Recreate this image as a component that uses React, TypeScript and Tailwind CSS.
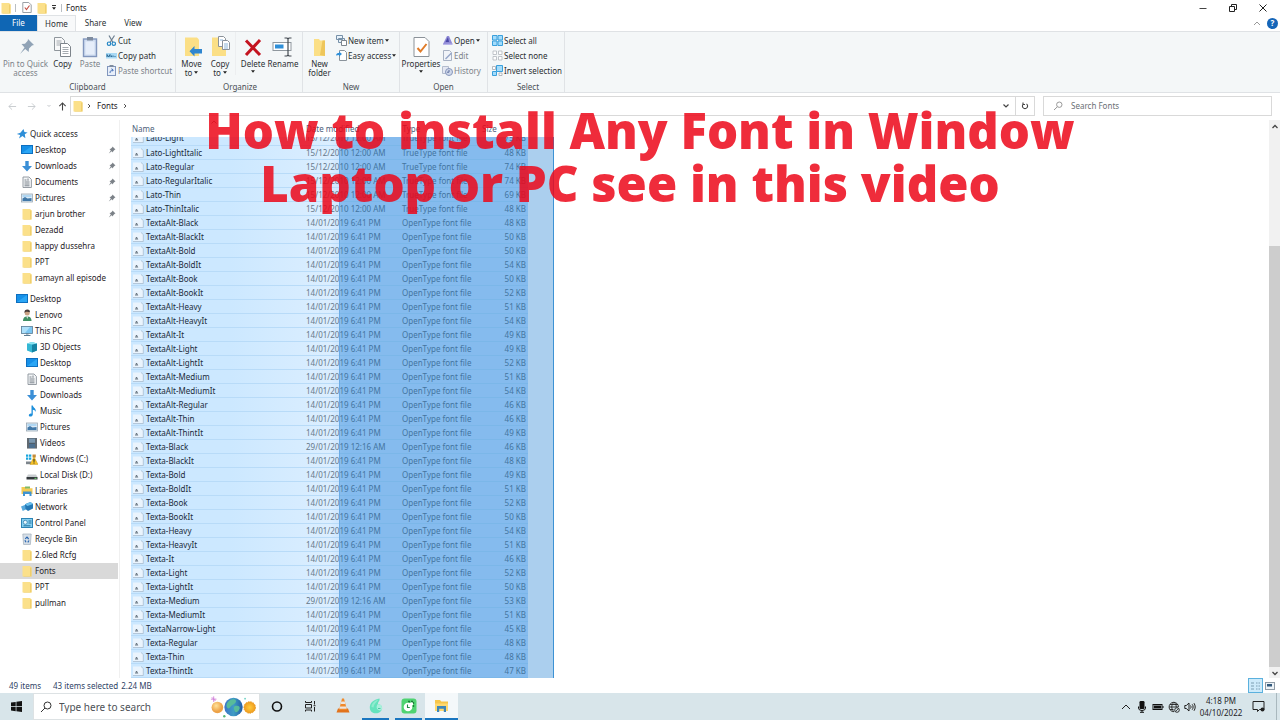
import type { ReactNode } from "react";

const ui = "font-['Noto_Sans','Open_Sans',sans-serif]";

type IconName =
  | "star" | "desktop" | "download" | "doc" | "picture" | "folder" | "user" | "pc" | "cube"
  | "music" | "video" | "windrive" | "disk" | "library" | "network" | "control" | "recycle";

const navShapes: Record<IconName, ReactNode> = {
  star: (
    <path d="M7.500 1l.9 3 3.200.5-2.800 1.800.6 4-3-2.400L3 10.500l1.200-3.400L.8 6l3.600-1.200z" fill="#2f8fd8" />
  ),
  desktop: (
    <>
      <rect x="0.5" y="1.5" width="11" height="8" fill="#1690e8" stroke="#0d6fc0" />
      <path d="M1 9l10-7v7z" fill="#2ba6f5" />
    </>
  ),
  download: <path d="M4.3 1h3.4v5H11L6 11.5 1 6h3.3z" fill="#3b8fd6" />,
  doc: (
    <>
      <path d="M2 1h6l2.4 2.4V11.5H2z" fill="#f4f6f8" stroke="#8b929a" strokeWidth=".9" />
      <path d="M3.5 4h2M3.5 6h5M3.5 8h5M3.5 9.8h5M7 2.5v2.3" stroke="#6d7680" strokeWidth=".9" />
    </>
  ),
  picture: (
    <>
      <rect x="0.5" y="2" width="11" height="8" fill="#dcebf7" stroke="#9aa7b2" strokeWidth=".8" />
      <path d="M1.5 9V6.5L4 5l2.5 1.6L10.5 6v3z" fill="#4178a8" />
      <path d="M1.5 3.2h9v1.6h-9z" fill="#a6d3f2" />
    </>
  ),
  folder: (
    <>
      <path d="M1.500 1h7.500l1.500 1.200V11.500h-9z" fill="#fbe08a" />
      <path d="M9 2.500h1.500v9H2.500V11H9z" fill="#f0cf6c" />
    </>
  ),
  user: (
    <>
      <path d="M2 12c0-3.4 1.6-4.6 4.2-4.6S10.500 8.600 10.500 12z" fill="#3f8f63" />
      <circle cx="6.200" cy="4" r="2.500" fill="#c9a183" />
      <path d="M3.500 4c-.3-2.600 1-3.500 2.900-3.500S9.200 1.700 8.900 3.200C7.500 2.700 5.500 2.500 4.600 3z" fill="#463a38" />
      <path d="M5.400 7.400h1.700L6.300 10z" fill="#eee" />
    </>
  ),
  pc: (
    <>
      <rect x="0.5" y="1.500" width="11" height="7" fill="#7cc6f2" stroke="#5d7d94" strokeWidth=".8" />
      <path d="M1 2l8 0-5 6H1z" fill="#aee0fa" />
      <path d="M3 10.500h6.500M5 9h2.500" stroke="#5d7d94" />
    </>
  ),
  cube: (
    <>
      <path d="M1 2.500L6 1l5 1.500v7L6 11.500 1 9.500z" fill="#35b7d4" />
      <path d="M6 3.500l5-1v7l-5 2z" fill="#1583a3" />
      <path d="M1 2.500L6 1l5 1.500-5 1z" fill="#8de4f2" />
    </>
  ),
  music: (
    <path d="M5.500 .5h1.300c.3 2.300 4 3.200 2.700 6.500-.3-1.600-1.300-2.100-2.700-2.300V9.500c0 1.400-1.400 2.100-2.600 2-1.600-.2-2.100-2 0-2.800.5-.2.900-.2 1.300 0z" fill="#1d8fdb" />
  ),
  video: (
    <>
      <rect x="1" y="1" width="10" height="10.500" fill="#4d565e" />
      <rect x="3" y="1.500" width="6" height="4.300" fill="#7b98b0" />
      <rect x="3" y="6.700" width="6" height="4.300" fill="#4c6f8f" />
      <path d="M2 1.500v10M10 1.500v10" stroke="#b5bbc0" strokeWidth=".8" strokeDasharray="1 1" />
    </>
  ),
  windrive: (
    <>
      <path d="M0 1.500h2.300v2.200H0zM3 1.500h2.300v2.200H3zM0 4.500h2.300v2.200H0zM3 4.500h2.300v2.200H3z" fill="#19a6de" />
      <path d="M6.500 1.500h3.300v3H6.500z" fill="#c58c3c" />
      <path d="M0 8.500h5v2.700H0z" fill="#7d858c" />
      <path d="M8 3.800l4 7.600H4z" fill="#f7c325" stroke="#b88908" strokeWidth=".4" />
      <path d="M8 6v2.800M8 9.500v1" stroke="#222" />
    </>
  ),
  disk: (
    <>
      <path d="M2 5.500h8l1.500 2.500H.5z" fill="#c9cdd0" />
      <path d="M.5 8h11v2.500H.5z" fill="#34393d" />
      <path d="M8.500 9.300h2" stroke="#6fdd6f" />
    </>
  ),
  library: (
    <>
      <path d="M.5 2h4l1 1.200h6V9H.5z" fill="#f5cb53" />
      <path d="M4 1.500h5v2H4z" fill="#7fb966" />
      <path d="M2 6.500h8.500V11H8.500V9H4v2H2z" fill="#3f93d2" />
    </>
  ),
  network: (
    <>
      <path d="M0 5.500l5-2 1.500 4.200-4.800 2.200z" fill="#57a9dc" />
      <path d="M4 3.200L9.500 1 12 3v4.500L7 10l-2.500-2z" fill="#2378b5" />
      <path d="M4 3.200L9.500 1 12 3 6.500 5z" fill="#6cc1ee" />
    </>
  ),
  control: (
    <>
      <rect x="0.500" y="1.500" width="11" height="9" fill="#86d0f2" stroke="#2d84b5" />
      <circle cx="4.300" cy="5.300" r="2" fill="#eaf8ff" stroke="#2271a1" strokeWidth=".7" />
      <path d="M7.500 4h3M7.500 6h3M2.500 8.800h7" stroke="#1c6693" strokeWidth=".9" />
    </>
  ),
  recycle: (
    <>
      <path d="M1.800 1h8.400l-.8 10.500H2.600z" fill="#d5dee7" stroke="#a2afba" strokeWidth=".7" />
      <path d="M6 3.800L7.600 6.200M8 7.500L6.800 9.300M5 9.300L3.900 7.200M4.300 6L6 3.800" stroke="#2a66b0" strokeWidth="1.200" />
    </>
  ),
};

function NavIcon({ name }: { name: IconName }) {
  return <svg viewBox="0 0 12 12" className="size-3 shrink-0" aria-hidden="true">{navShapes[name]}</svg>;
}

function Pin() {
  return (
    <svg viewBox="0 0 8 8" className="size-2 shrink-0" aria-hidden="true">
      <path d="M4.500.5l3 3-.8.300-1.500 1.500-.2 1.300L3.700 5.300.8 7.500l2-3L1.500 3l1.300-.2L4.300 1.300z" fill="#7b8187" />
    </svg>
  );
}

type NavItem = { icon: IconName; label: string; level: number; pinned?: boolean; active?: boolean };

const quick: NavItem[] = [
  { icon: "star", label: "Quick access", level: 0 },
  { icon: "desktop", label: "Desktop", level: 1, pinned: true },
  { icon: "download", label: "Downloads", level: 1, pinned: true },
  { icon: "doc", label: "Documents", level: 1, pinned: true },
  { icon: "picture", label: "Pictures", level: 1, pinned: true },
  { icon: "folder", label: "arjun brother", level: 1, pinned: true },
  { icon: "folder", label: "Dezadd", level: 1 },
  { icon: "folder", label: "happy dussehra", level: 1 },
  { icon: "folder", label: "PPT", level: 1 },
  { icon: "folder", label: "ramayn all episode", level: 1 },
];

const tree: NavItem[] = [
  { icon: "desktop", label: "Desktop", level: 0 },
  { icon: "user", label: "Lenovo", level: 1 },
  { icon: "pc", label: "This PC", level: 1 },
  { icon: "cube", label: "3D Objects", level: 2 },
  { icon: "desktop", label: "Desktop", level: 2 },
  { icon: "doc", label: "Documents", level: 2 },
  { icon: "download", label: "Downloads", level: 2 },
  { icon: "music", label: "Music", level: 2 },
  { icon: "picture", label: "Pictures", level: 2 },
  { icon: "video", label: "Videos", level: 2 },
  { icon: "windrive", label: "Windows (C:)", level: 2 },
  { icon: "disk", label: "Local Disk (D:)", level: 2 },
  { icon: "library", label: "Libraries", level: 1 },
  { icon: "network", label: "Network", level: 1 },
  { icon: "control", label: "Control Panel", level: 1 },
  { icon: "recycle", label: "Recycle Bin", level: 1 },
  { icon: "folder", label: "2.6led Rcfg", level: 1 },
  { icon: "folder", label: "Fonts", level: 1, active: true },
  { icon: "folder", label: "PPT", level: 1 },
  { icon: "folder", label: "pullman", level: 1 },
];

const indents = ["pl-4", "pl-[21px]", "pl-[26px]"];

function NavList({ items }: { items: NavItem[] }) {
  return (
    <ul>
      {items.map((it, i) => (
        <li key={i}>
          <a
            href="#"
            className={`flex h-4 items-center gap-[2px] pr-[2px] ${indents[it.level]} ${it.active ? "bg-[#d9d9d9]" : ""}`}
          >
            <NavIcon name={it.icon} />
            <span className="flex-1 whitespace-nowrap">{it.label}</span>
            {it.pinned && <Pin />}
          </a>
        </li>
      ))}
    </ul>
  );
}

const T = "TrueType font file";
const O = "OpenType font file";
const D1 = "15/12/2010 12:00 AM";
const D2 = "14/01/2019 6:41 PM";
const D3 = "29/01/2019 12:16 AM";

const files: [string, string, string, number][] = [
  ["Lato-Light", D1, T, 75],
  ["Lato-LightItalic", D1, T, 48],
  ["Lato-Regular", D1, T, 74],
  ["Lato-RegularItalic", D1, T, 74],
  ["Lato-Thin", D1, T, 69],
  ["Lato-ThinItalic", D1, T, 48],
  ["TextaAlt-Black", D2, O, 48],
  ["TextaAlt-BlackIt", D2, O, 50],
  ["TextaAlt-Bold", D2, O, 50],
  ["TextaAlt-BoldIt", D2, O, 54],
  ["TextaAlt-Book", D2, O, 50],
  ["TextaAlt-BookIt", D2, O, 52],
  ["TextaAlt-Heavy", D2, O, 51],
  ["TextaAlt-HeavyIt", D2, O, 54],
  ["TextaAlt-It", D2, O, 49],
  ["TextaAlt-Light", D2, O, 49],
  ["TextaAlt-LightIt", D2, O, 52],
  ["TextaAlt-Medium", D2, O, 51],
  ["TextaAlt-MediumIt", D2, O, 54],
  ["TextaAlt-Regular", D2, O, 46],
  ["TextaAlt-Thin", D2, O, 46],
  ["TextaAlt-ThintIt", D2, O, 49],
  ["Texta-Black", D3, O, 46],
  ["Texta-BlackIt", D2, O, 48],
  ["Texta-Bold", D2, O, 49],
  ["Texta-BoldIt", D2, O, 51],
  ["Texta-Book", D2, O, 52],
  ["Texta-BookIt", D2, O, 50],
  ["Texta-Heavy", D2, O, 54],
  ["Texta-HeavyIt", D2, O, 51],
  ["Texta-It", D2, O, 46],
  ["Texta-Light", D2, O, 52],
  ["Texta-LightIt", D2, O, 50],
  ["Texta-Medium", D3, O, 53],
  ["Texta-MediumIt", D2, O, 51],
  ["TextaNarrow-Light", D2, O, 45],
  ["Texta-Regular", D2, O, 48],
  ["Texta-Thin", D2, O, 48],
  ["Texta-ThintIt", D2, O, 47],
];

function FontFileIcon() {
  return (
    <svg viewBox="0 0 12 10" className="h-[10px] w-3 shrink-0" aria-hidden="true">
      <path d="M1 .5h8L11.300 2.500v7H1z" fill="#eaf4fd" />
      <path d="M1 9.500h10.300V2.500L9 .5" fill="none" stroke="#a3b6c8" strokeWidth=".7" />
      <path d="M3.500 7.500L4.500 5l1.200 2.500M4 7h1.300" fill="none" stroke="#5b6975" strokeWidth=".9" />
    </svg>
  );
}

function Columns() {
  return (
    <colgroup>
      <col className="w-[175px]" />
      <col className="w-24" />
      <col className="w-20" />
      <col className="w-[46px]" />
    </colgroup>
  );
}

function FileList() {
  return (
    <section className="flex min-w-0 flex-1 flex-col pl-[11px]">
      <table className="w-[397px] shrink-0 table-fixed border-collapse text-[#4c607a]">
        <Columns />
        <thead>
          <tr className="h-[17px] text-left">
            <th className="relative pl-px font-normal">
              Name
              <svg viewBox="0 0 6 4" className="absolute top-0 right-[89px] h-1 w-[6px]" aria-hidden="true">
                <path d="M.5 3.500L3 1l2.500 2.500" fill="none" stroke="#555" strokeWidth=".8" />
              </svg>
            </th>
            <th className="border-r border-[#e5e5e5] font-normal">Date modified</th>
            <th className="font-normal">Type</th>
            <th className="font-normal">Size</th>
          </tr>
        </thead>
      </table>
      <div className="relative flex min-h-0 flex-1 flex-col justify-end overflow-hidden">
        <table className="w-[397px] shrink-0 table-fixed border-collapse bg-linear-to-r from-[#cce8ff] from-25% via-[#dbeeff] via-50% to-[#c6e2ff] to-54%">
          <Columns />
          <tbody>
            {files.map(([name, date, type, size]) => (
              <tr key={name} className="h-[14px] border-b border-[#b8dbf8]">
                <td className="p-0 pl-px">
                  <span className="flex h-[13px] items-center gap-[2px] whitespace-nowrap text-[#1b2a3a]">
                    <FontFileIcon />
                    {name}
                  </span>
                </td>
                <td className="p-0 whitespace-nowrap text-[#66788a]">{date}</td>
                <td className="p-0 whitespace-nowrap text-[#66788a]">{type}</td>
                <td className="p-0 pr-[2px] text-right whitespace-nowrap text-[#66788a]">{size} KB</td>
              </tr>
            ))}
          </tbody>
        </table>
        <div className="absolute inset-y-0 left-[208px] w-[215px] border-r border-l border-r-[#3d92d4] border-l-[#6cabe4] bg-[#006ccc]/33 bg-clip-padding" />
      </div>
    </section>
  );
}

function Caret() {
  return (
    <svg viewBox="0 0 4 3" className="inline h-[3px] w-1 shrink-0" aria-hidden="true">
      <path d="M0 .3h4L2 2.700z" fill="#222" />
    </svg>
  );
}

function Group({ label, className, children }: { label: string; className: string; children: ReactNode }) {
  return (
    <div className={`flex shrink-0 flex-col border-r border-[#e0e3e6] ${className}`}>
      <div className="flex flex-1 items-start">{children}</div>
      <div className="h-[11px] text-center leading-[12px] text-[#4a4f55]">{label}</div>
    </div>
  );
}

function Big({ icon, lines, width, disabled, caret }: { icon: ReactNode; lines: string[]; width: string; disabled?: boolean; caret?: "inline" | "below" }) {
  return (
    <button type="button" disabled={disabled} className={`flex shrink-0 flex-col items-center pt-1 ${width} ${disabled ? "text-[#7d8389]" : "text-[#2b2f33]"}`}>
      <svg viewBox="0 0 22 22" className="mb-px size-[22px]" aria-hidden="true">{icon}</svg>
      {lines.map((l, i) => (
        <span key={l} className="flex h-[9px] items-center gap-[2px] leading-[9px] whitespace-nowrap">
          {l}
          {caret === "inline" && i === lines.length - 1 && <Caret />}
        </span>
      ))}
      {caret === "below" && <span className="flex h-[7px] items-center"><Caret /></span>}
    </button>
  );
}

function Small({ icon, label, disabled, caret }: { icon: ReactNode; label: string; disabled?: boolean; caret?: boolean }) {
  return (
    <button type="button" disabled={disabled} className={`flex h-[15px] items-center gap-px whitespace-nowrap ${disabled ? "text-[#7d8389]" : "text-[#2b2f33]"}`}>
      <svg viewBox="0 0 11 11" className="size-[11px]" aria-hidden="true">{icon}</svg>
      {label}
      {caret && <Caret />}
    </button>
  );
}

function Ribbon() {
  return (
    <div className="flex h-[62px] shrink-0 overflow-hidden border-y border-[#dfe2e5] bg-[#f4f7f8]">
      <Group label="Clipboard" className="w-[176px]">
        <Big width="w-[51px]" disabled lines={["Pin to Quick", "access"]} icon={<path d="M13 3l6 6-2 .5-3 3-.3 3.500-3.500-3L5 18l4.500-6.500L6.500 8l3.500-.3 2.700-3z" fill="#90a3b6" />} />
        <Big width="w-[23px]" lines={["Copy"]} icon={<>
          <path d="M2.500 1.500h7l3 3v10h-10z" fill="#f7f8f9" stroke="#8f969c" />
          <path d="M4.500 5h5M4.500 7h5M4.500 9h5" stroke="#a5abb0" />
          <path d="M8.500 7.500h7l3 3v10h-10z" fill="#fff" stroke="#7d848b" />
          <path d="M10.500 11.500h6M10.500 13.500h6M10.500 15.500h6M10.500 17.500h6" stroke="#a5abb0" />
        </>} />
        <Big width="w-8" disabled lines={["Paste"]} icon={<>
          <rect x="4.500" y="3" width="13" height="17.500" fill="#cfdcf0" stroke="#8196bd" strokeWidth="1.400" />
          <rect x="6.500" y="5.500" width="9" height="13" fill="#e6eefa" />
          <rect x="8" y="1" width="6" height="3.500" fill="#7f8c9f" />
        </>} />
        <div className="flex flex-col pt-px">
          <Small label="Cut" icon={<>
            <path d="M3 .5l4 7M8.500.5l-4.500 7" stroke="#6d7f90" strokeWidth="1.200" />
            <circle cx="3" cy="8.700" r="1.700" fill="none" stroke="#2285c4" strokeWidth="1.200" />
            <circle cx="7.800" cy="8.700" r="1.700" fill="none" stroke="#2285c4" strokeWidth="1.200" />
          </>} />
          <Small label="Copy path" icon={<>
            <rect x="0" y="3" width="11" height="5.500" fill="#a8d9f5" />
            <path d="M1 7V4.500L2.500 7 4 4.500V7M5.500 7v-1.500M7 7v-1.500M9 7v-1" stroke="#20618f" fill="none" strokeWidth=".9" />
          </>} />
          <Small disabled label="Paste shortcut" icon={<>
            <rect x="1.500" y="1.500" width="8" height="9" fill="#e8effa" stroke="#8196bd" />
            <rect x="3.500" y="0" width="4" height="2" fill="#7f8c9f" />
            <path d="M4 8c0-2 1-3 3-3M5.500 3.700L7.300 5 6 6.500" stroke="#4671b8" fill="none" />
          </>} />
        </div>
      </Group>
      <Group label="Organize" className="w-[127px] pl-[2px]">
        <Big width="w-[27px]" caret="inline" lines={["Move", "to"]} icon={<>
          <path d="M4 1.500h12l2 2V20H4z" fill="#fbdf86" />
          <path d="M13.500 10v3H21v4.500h-7.500v3L8.500 15.300z" fill="#2f86cf" />
        </>} />
        <Big width="w-[30px]" caret="inline" lines={["Copy", "to"]} icon={<>
          <path d="M3 1.500h12l2 2V20H3z" fill="#fbdf86" />
          <path d="M9.500.500h5l2 2v8h-7z" fill="#fff" stroke="#8b9299" />
          <path d="M13.500 4.500h5l2 2v7h-7z" fill="#fff" stroke="#8b9299" />
          <path d="M15 8h4M15 10h4M15 12h4M11 4h3" stroke="#8bb4d8" />
        </>} />
        <Big width="w-[35px] border-l border-[#eceef0]" caret="below" lines={["Delete"]} icon={<path d="M4 4.500l14 14.500M18 4L4 19" stroke="#c41420" strokeWidth="3" />} />
        <Big width="w-[26px]" lines={["Rename"]} icon={<>
          <rect x="1" y="6.500" width="18" height="8" fill="#fff" stroke="#8f979e" />
          <rect x="3" y="8.500" width="8.500" height="4" fill="#2f8fd8" />
          <path d="M12.500 2h2.500l1 1 1-1h2.500M16 3v16M12.500 20h2.500l1-1 1 1h2.500" stroke="#444b52" strokeWidth="1.200" fill="none" />
        </>} />
      </Group>
      <Group label="New" className="w-[97px]">
        <Big width="w-[33px]" lines={["New", "folder"]} icon={<>
          <path d="M5 3h5l1 1.500h5V20H5z" fill="#fbdf86" />
          <path d="M13.500 4.500H16V20l-5-1z" fill="#eec65b" />
        </>} />
        <div className="flex flex-col pt-px">
          <Small caret label="New item" icon={<>
            <path d="M.5.500h6v4h-6zM2.500 3.500h6v4h-6z" fill="#e8f2fa" stroke="#7690a8" />
            <path d="M5.500 5.500h5v5h-5z" fill="#fff" stroke="#7c858d" />
          </>} />
          <Small caret label="Easy access" icon={<>
            <path d="M3.500.5h5l2 2v8h-7z" fill="#fff" stroke="#8a939b" />
            <path d="M0 5.500C.3 3.500 1.500 3 3 3V1.500L6 4 3 6.500V5C2 5 1 5.300 0 5.500z" fill="#2f8fd8" />
          </>} />
        </div>
      </Group>
      <Group label="Open" className="w-[88px]">
        <Big width="w-[42px]" caret="below" lines={["Properties"]} icon={<>
          <path d="M4 1.500h11l4 4v15H4z" fill="#fff" stroke="#8b9299" />
          <path d="M7.500 12l3 3.500 6-7.500" fill="none" stroke="#e07b28" strokeWidth="2" />
        </>} />
        <div className="flex flex-col pt-px">
          <Small caret label="Open" icon={<>
            <path d="M1 9L5 1l2 0 3.500 8-4 .5z" fill="#8f8ad6" />
            <path d="M3.500 7L6 2l1 5z" fill="#4a48a5" /><path d="M1 9l9.500-.5v1.500H1z" fill="#b9b6ea" />
          </>} />
          <Small disabled label="Edit" icon={<>
            <path d="M1.500.500h6l2 2v8h-8z" fill="#f1f4f9" stroke="#a9b3c4" />
            <path d="M3.500 9l6-6" stroke="#94a6c8" strokeWidth="1.500" />
          </>} />
          <Small disabled label="History" icon={<>
            <path d="M.500 1.500h6v7h-6z" fill="#e4e8f2" stroke="#b3bccd" />
            <circle cx="7" cy="7" r="3.500" fill="#cfd8ea" stroke="#8796bb" /><path d="M7 5v2.200h-2" stroke="#5d6f9e" fill="none" />
          </>} />
        </div>
      </Group>
      <Group label="Select" className="w-[77px] pl-[4px]">
        <div className="flex flex-col pt-px">
          <Small label="Select all" icon={<path d="M.500.500h4.500v4.500H.500zM6 .500h4.500v4.500H6zM.500 6h4.500v4.500H.500zM6 6h4.500v4.500H6z" fill="#a4dcfb" stroke="#3aa0dc" />} />
          <Small label="Select none" icon={<path d="M1 1h3.500v3.500H1zM6.500 1H10v3.500H6.500zM1 6.500h3.500V10H1zM6.500 6.500H10V10H6.500z" fill="#fff" stroke="#b3b8bd" strokeWidth=".8" />} />
          <Small label="Invert selection" icon={<>
            <path d="M4.500.500h6v6h-6zM.500 6.500h4v4h-4z" fill="#a4dcfb" stroke="#3aa0dc" />
            <path d="M.500 1.500h3v3h-3zM7 8h3v2.500H7z" fill="#fff" stroke="#a4aab0" strokeWidth=".8" />
          </>} />
        </div>
      </Group>
    </div>
  );
}

function Stroke({ d, className, color = "#444", width = 1, box = "0 0 10 10" }: { d: string; className: string; color?: string; width?: number; box?: string }) {
  return (
    <svg viewBox={box} className={`shrink-0 ${className}`} aria-hidden="true">
      <path d={d} fill="none" stroke={color} strokeWidth={width} />
    </svg>
  );
}

function TitleBar() {
  return (
    <header className="flex h-[15px] shrink-0 items-center">
      <NavIcon name="folder" />
      <span className="ml-[3px] h-2 w-px bg-[#b9bec3]" />
      <svg viewBox="0 0 10 11" className="ml-[6px] h-[11px] w-[10px]" aria-hidden="true">
        <path d="M.8.500h6l2.400 2.400v7.600H.8z" fill="#fff" stroke="#9aa0a6" />
        <path d="M2.800 5.500l1.700 2 3-4" fill="none" stroke="#c34d43" strokeWidth="1.100" />
      </svg>
      <span className="ml-1"><NavIcon name="folder" /></span>
      <span className="ml-1 flex flex-col items-center gap-px">
        <span className="h-px w-1 bg-[#333]" />
        <Caret />
      </span>
      <span className="ml-[5px] h-2 w-px bg-[#b9bec3]" />
      <span className="ml-1 flex-1">Fonts</span>
      <button type="button" aria-label="Minimize" className="flex w-[30px] justify-center"><Stroke d="M1.500 5.500h7" className="size-[10px]" /></button>
      <button type="button" aria-label="Restore" className="flex w-[30px] justify-center"><Stroke d="M1.500 3.500h5v5h-5zM3.500 3.500v-2h5v5h-2" className="size-[10px]" color="#222" /></button>
      <button type="button" aria-label="Close" className="mr-[2px] flex w-[30px] justify-center"><Stroke d="M1.500 1.500l7 7M8.500 1.500l-7 7" className="size-[10px]" color="#222" /></button>
    </header>
  );
}

function Tabs() {
  return (
    <nav className="flex h-4 shrink-0 items-stretch text-[#2b2f33]">
      <button type="button" className="w-[37px] bg-[#0f66b4] text-white">File</button>
      <button type="button" className="w-[39px] border-x border-t border-[#dfe2e5] bg-[#f8f9fa]">Home</button>
      <button type="button" className="w-[39px]">Share</button>
      <button type="button" className="w-9">View</button>
      <span className="flex-1" />
      <button type="button" aria-label="Collapse ribbon" className="flex w-[14px] items-center"><Stroke d="M1 6l3-3 3 3" box="0 0 8 8" className="size-2" color="#999" /></button>
      <button type="button" aria-label="Help" className="mr-[2px] flex items-center">
        <span className="flex size-[11px] items-center justify-center rounded-full bg-[#1565b8] font-bold text-white">?</span>
      </button>
    </nav>
  );
}

function AddressRow() {
  return (
    <div className="flex h-[27px] shrink-0 items-start gap-2 pt-[3px] pr-2">
      <div className="flex min-w-0 flex-1 items-center">
        <div className="flex w-[70px] shrink-0 items-center gap-[10px] pl-2">
          <button type="button" aria-label="Back"><Stroke d="M9 5H1M4.500 1.500L1 5l3.500 3.500" className="size-[9px]" color="#c4c8cc" /></button>
          <button type="button" aria-label="Forward"><Stroke d="M1 5h8M5.500 1.500L9 5 5.500 8.500" className="size-[9px]" color="#c4c8cc" /></button>
          <span className="flex items-center gap-[6px]">
            <button type="button" aria-label="Recent"><Stroke d="M1.500 3L3 4.500 4.500 3" box="0 0 6 8" className="h-2 w-[6px]" color="#c4c8cc" /></button>
            <button type="button" aria-label="Up"><Stroke d="M5 9.500V1M1.500 4.500L5 1l3.500 3.500" className="size-[9px]" color="#444" width={1.2} /></button>
          </span>
        </div>
        <div className="flex h-5 min-w-0 flex-1 items-center border border-[#d9d9d9]">
          <span className="ml-px"><NavIcon name="folder" /></span>
          <span className="ml-[3px]"><Stroke d="M1.500 1.500L4 4 1.500 6.500" box="0 0 8 8" className="size-[6px]" width={1.3} /></span>
          <span className="ml-1">Fonts</span>
          <span className="ml-[5px]"><Stroke d="M1.500 1.500L4 4 1.500 6.500" box="0 0 8 8" className="size-[6px]" width={1.3} /></span>
          <span className="flex-1" />
          <button type="button" aria-label="Previous locations" className="mr-[5px]"><Stroke d="M1.500 2.500L4 5l2.500-2.500" box="0 0 8 8" className="size-2" width={1.2} /></button>
          <button type="button" aria-label="Refresh" className="flex h-full w-[19px] items-center justify-center border-l border-[#d9d9d9]">
            <Stroke d="M6.500 2.900A2.600 2.600 0 1 1 3.500 2.900M3 1.500v2h2" className="size-[10px]" width={1.1} />
          </button>
        </div>
      </div>
      <label className="flex h-5 w-[18%] shrink-0 items-center gap-2 border border-[#d9d9d9] pl-[9px]">
        <Stroke d="M9 3.700a2.700 2.700 0 1 1-5.400 0a2.700 2.700 0 1 1 5.400 0M4.300 5.800L1 9" className="size-[10px]" color="#999" />
        <input aria-label="Search Fonts" placeholder="Search Fonts" className="min-w-0 flex-1 outline-none placeholder:text-[#6b7075]" />
      </label>
    </div>
  );
}

function ScrollBar() {
  return (
    <div className="flex w-[11px] shrink-0 flex-col items-center bg-[#f1f1f1]">
      <Stroke d="M1.500 5L4 2.500 6.500 5" box="0 0 8 8" className="mt-[3px] size-2" width={1.3} />
      <div className="flex w-full flex-1 flex-col">
        <div className="grow-[115]" />
        <div className="w-full grow-[423] bg-[#cdcdcd]" />
      </div>
      <Stroke d="M1.500 3L4 5.500 6.500 3" box="0 0 8 8" className="mt-[2px] mb-px size-2" width={1.3} />
    </div>
  );
}

function StatusBar() {
  return (
    <footer className="flex h-[15px] shrink-0 items-center pl-[9px] text-[#2f4366]">
      <span>49 items</span>
      <span className="ml-3">43 items selected</span>
      <span className="ml-[3px] flex-1">2.24 MB</span>
      <button type="button" aria-label="Details view" className="flex h-[15px] w-[15px] items-center justify-center border border-[#5bb1de] bg-[#cdeafa]">
        <Stroke d="M1 2h3M1 5h3M1 8h3M6 2h1.500M8.500 2H10M6 5h1.500M8.500 5H10M6 8h1.500M8.500 8H10" box="0 0 11 10" className="h-[10px] w-[11px]" color="#7d9db2" width={1.2} />
      </button>
      <button type="button" aria-label="Large icons view" className="mr-[3px] flex w-[14px] items-center justify-center">
        <svg viewBox="0 0 10 8" className="h-2 w-[10px]" aria-hidden="true">
          <rect x=".500" y=".500" width="9" height="7" fill="#eef3f7" stroke="#8f9ba6" />
          <path d="M2 2h5v2.500H2z" fill="#31597c" />
        </svg>
      </button>
    </footer>
  );
}

function TaskButton({ label, open, active, children }: { label: string; open?: boolean; active?: boolean; children: ReactNode }) {
  return (
    <button type="button" aria-label={label} className={`flex w-[33px] shrink-0 flex-col items-center ${active ? "bg-[#f4f8fa]" : ""}`}>
      <span className="flex flex-1 items-center">{children}</span>
      <span className={`h-[2px] ${active ? "w-full" : "w-[27px]"} ${open ? "bg-[#1a76c0]" : ""}`} />
    </button>
  );
}

function Taskbar() {
  return (
    <div className="flex h-[27px] shrink-0 items-stretch bg-[#d8e5ea]">
      <button type="button" aria-label="Start" className="flex w-[33px] shrink-0 items-center justify-center">
        <svg viewBox="0 0 11 11" className="size-[11px]" aria-hidden="true">
          <path d="M0 1.600L4.700.9v4.300H0zM5.400.8L11 0v5.200H5.400zM0 5.900h4.700v4.300L0 9.500zM5.400 5.900H11V11l-5.600-.8z" fill="#111" />
        </svg>
      </button>
      <label className="flex w-[227px] shrink-0 items-center border border-[#dde2e4] bg-white pl-[6px] text-[10px]">
        <Stroke d="M11 4.500a3.500 3.500 0 1 1-7 0a3.500 3.500 0 1 1 7 0M5 7L1 11" box="0 0 12 12" className="size-3" color="#333" />
        <input aria-label="Type here to search" placeholder="Type here to search" className="ml-[7px] min-w-0 flex-1 outline-none placeholder:text-[#4d5156]" />
        <svg viewBox="0 0 50 26" className="h-6 w-[50px] shrink-0" aria-hidden="true">
          <defs>
            <radialGradient id="moon" cx=".4" cy=".35"><stop offset="0" stopColor="#ffe39b" /><stop offset="1" stopColor="#eda247" /></radialGradient>
            <linearGradient id="earth"><stop offset="0" stopColor="#3b73c9" /><stop offset=".5" stopColor="#3f9cc4" /><stop offset="1" stopColor="#225ba6" /></linearGradient>
            <radialGradient id="sun"><stop offset="0" stopColor="#ffcc3d" /><stop offset="1" stopColor="#ee9a1f" /></radialGradient>
          </defs>
          <circle cx="7" cy="13.500" r="6.300" fill="url(#moon)" />
          <circle cx="24.500" cy="13" r="10" fill="url(#earth)" />
          <path d="M19 7c3-3 7-3 8-1s-2 4-4 5-3 5-5 3-1-5 1-7zM26 12c3-1 6 0 5 3s-4 5-5 3-2-5 0-6z" fill="#58bb9a" />
          <circle cx="42" cy="13.500" r="6.300" fill="url(#sun)" />
          <circle cx="42" cy="13.500" r="6.300" fill="none" stroke="#e99a20" strokeDasharray="1.500 1.200" />
          <path d="M3 1.500v6M0 4.500h6M1 2.500l4 4" stroke="#cf7fd8" />
          <circle cx="37" cy="4" r="1" fill="#6fd3c4" /><circle cx="14.500" cy="23" r="1.300" fill="#55b877" />
        </svg>
      </label>
      <TaskButton label="Cortana">
        <svg viewBox="0 0 12 12" className="size-3" aria-hidden="true"><circle cx="6" cy="6.500" r="4.500" fill="none" stroke="#111" strokeWidth="1.600" /></svg>
      </TaskButton>
      <TaskButton label="Task view"><Stroke d="M1.500 1v1.500h6V1M1.500 4.500h6v3.500h-6zM1.500 11.500V10h6v1.500M10.500 1v3.500M10.500 7v4.500M9.500 5.700h2" box="0 0 12 12" className="size-3" color="#222" /></TaskButton>
      <TaskButton label="Media player">
        <svg viewBox="0 0 14 15" className="h-[15px] w-[14px]" aria-hidden="true">
          <path d="M2 10.500h10l1.500 4H.5z" fill="#e2731c" />
          <path d="M6 .5h2l3 11.500H3z" fill="#f08a2b" />
          <path d="M5.300 3.500h3.400l.7 2.500H4.700zM4 8.500h6l.6 2.300H3.400z" fill="#eee6df" />
        </svg>
      </TaskButton>
      <TaskButton label="Filmora" open>
        <svg viewBox="0 0 14 16" className="h-4 w-[14px]" aria-hidden="true">
          <path d="M10.500.5C4.500 1.500.5 5 .8 10c.3 3.500 3 5.500 6.400 5.300 3.600-.2 6-2.700 5.900-5.600-.1-2.200-1.800-3.500-3.900-3.400C8.200 4.300 11.300 3 10.500.5z" fill="#65e3bd" />
          <path d="M8.300 6.500c2-.6 4.700.6 4.800 3.200.1 1.300-.4 2.300-1.100 2.600-1.500.5-4-.5-4.300-2.300-.2-1.300 0-2.500.6-3.500z" fill="#a9f0dc" />
          <path d="M2.500 9C2.500 6 5 3 9 1.500 8.500 4 5 5 4.500 9.500z" fill="#8feccf" />
          <path d="M9 10.500h2.500" stroke="#4cc9a5" />
        </svg>
      </TaskButton>
      <TaskButton label="Screen recorder" open>
        <svg viewBox="0 0 16 16" className="size-4" aria-hidden="true">
          <rect x=".5" y=".5" width="15" height="15" rx="3" fill="#4fd371" />
          <path d="M7 3.500h5.500V9" fill="none" stroke="#1c7a38" strokeWidth="1.300" strokeDasharray="2 1" />
          <circle cx="7" cy="9" r="4.300" fill="#fff" />
          <path d="M6.500 6.500v3h2.300" fill="none" stroke="#238c44" strokeWidth="1.100" />
          <circle cx="10.500" cy="6" r="1.700" fill="#fff" />
        </svg>
      </TaskButton>
      <TaskButton label="File Explorer" open active>
        <svg viewBox="0 0 15 14" className="h-[14px] w-[15px]" aria-hidden="true">
          <path d="M1 1h5l1.300 1.500H14V12H1z" fill="#f7c64a" />
          <path d="M1 4.500h13V12H1z" fill="#ffd970" />
          <path d="M3 7h9v6H9.800V9.800H5.200V13H3z" fill="#3f86b8" />
        </svg>
      </TaskButton>
      <div className="min-w-0 flex-1" />
      <div className="flex shrink-0 items-center gap-1">
        <Stroke d="M2 8l4-4 4 4" box="0 0 12 12" className="size-3" color="#222" />
        <svg viewBox="0 0 12 12" className="size-3" aria-hidden="true">
          <rect x="3.500" y="0" width="5" height="8" rx="1.200" fill="#111" /><path d="M2.500 5.500v1.500a3.500 2.500 0 0 0 7 0V5.500M6 9.500v1.500M4 11.300h4" stroke="#111" fill="none" />
        </svg>
        <svg viewBox="0 0 12 12" className="size-3" aria-hidden="true">
          <rect x="1" y="3.500" width="9" height="5" fill="#d8e5ea" stroke="#111" /><rect x="2" y="4.500" width="7" height="3" fill="#111" /><path d="M11 5v2" stroke="#111" />
        </svg>
        <svg viewBox="0 0 12 12" className="size-3" aria-hidden="true">
          <path d="M10.500 6A4.700 4.700 0 1 0 6 10.700M1.300 6H10M6 1.300C3 4 3 8 6 10.700M6 1.300C8 3 8.300 4.500 8.200 6M2 3.500h8M2 8.500h3.500" fill="none" stroke="#222" strokeWidth=".9" />
          <circle cx="9" cy="9" r="2.300" fill="#d8e5ea" stroke="#222" strokeWidth=".9" /><path d="M7.500 10.500l3-3" stroke="#222" strokeWidth=".8" />
        </svg>
        <Stroke d="M.8 4.500h1.500L5 2v8L2.300 7.500H.8zM6.500 4.500c.7 1 .7 2 0 3M8.200 3.300c1.200 1.700 1.200 3.700 0 5.400M10 2.200c1.600 2.500 1.600 5.100 0 7.600" box="0 0 12 12" className="size-3" color="#222" />
      </div>
      <div className="flex w-[50px] shrink-0 flex-col items-center justify-center text-[#1e2327]">
        <span className="leading-[12px]">4:18 PM</span>
        <span className="leading-[12px]">04/10/2022</span>
      </div>
      <button type="button" aria-label="Notifications" className="flex w-[25px] shrink-0 items-center justify-center">
        <svg viewBox="0 0 13 13" className="size-[13px]" aria-hidden="true">
          <path d="M1 1.500h11v8H7.500L5.500 11.500v-2H1z" fill="none" stroke="#222" /><circle cx="10.500" cy="9.500" r="2" fill="#222" />
        </svg>
      </button>
      <div className="ml-[5px] w-1 shrink-0 border-l border-[#a9b8be]" />
    </div>
  );
}

export default function App() {
  return (
    <div className={`relative flex h-screen min-h-[480px] flex-col overflow-hidden bg-white text-[8px] leading-[12px] text-[#1f2226] ${ui}`}>
      <TitleBar />
      <Tabs />
      <Ribbon />
      <AddressRow />
      <main className="flex min-h-0 flex-1">
        <aside className="flex w-[120px] shrink-0 flex-col gap-[5px] border-r border-[#f0f0f0] pt-[6px] pr-px">
          <NavList items={quick} />
          <NavList items={tree} />
        </aside>
        <FileList />
        <ScrollBar />
      </main>
      <StatusBar />
      <Taskbar />
      <h1 className="pointer-events-none absolute inset-x-0 top-[104px] text-center font-['Open_Sans','Noto_Sans',sans-serif] text-[49px] leading-[53px] font-extrabold text-[#ec0719]/85">
        <span className="block">How to install Any Font in Window</span>
        <span className="block pr-5">Laptop or PC see in this video</span>
      </h1>
    </div>
  );
}
